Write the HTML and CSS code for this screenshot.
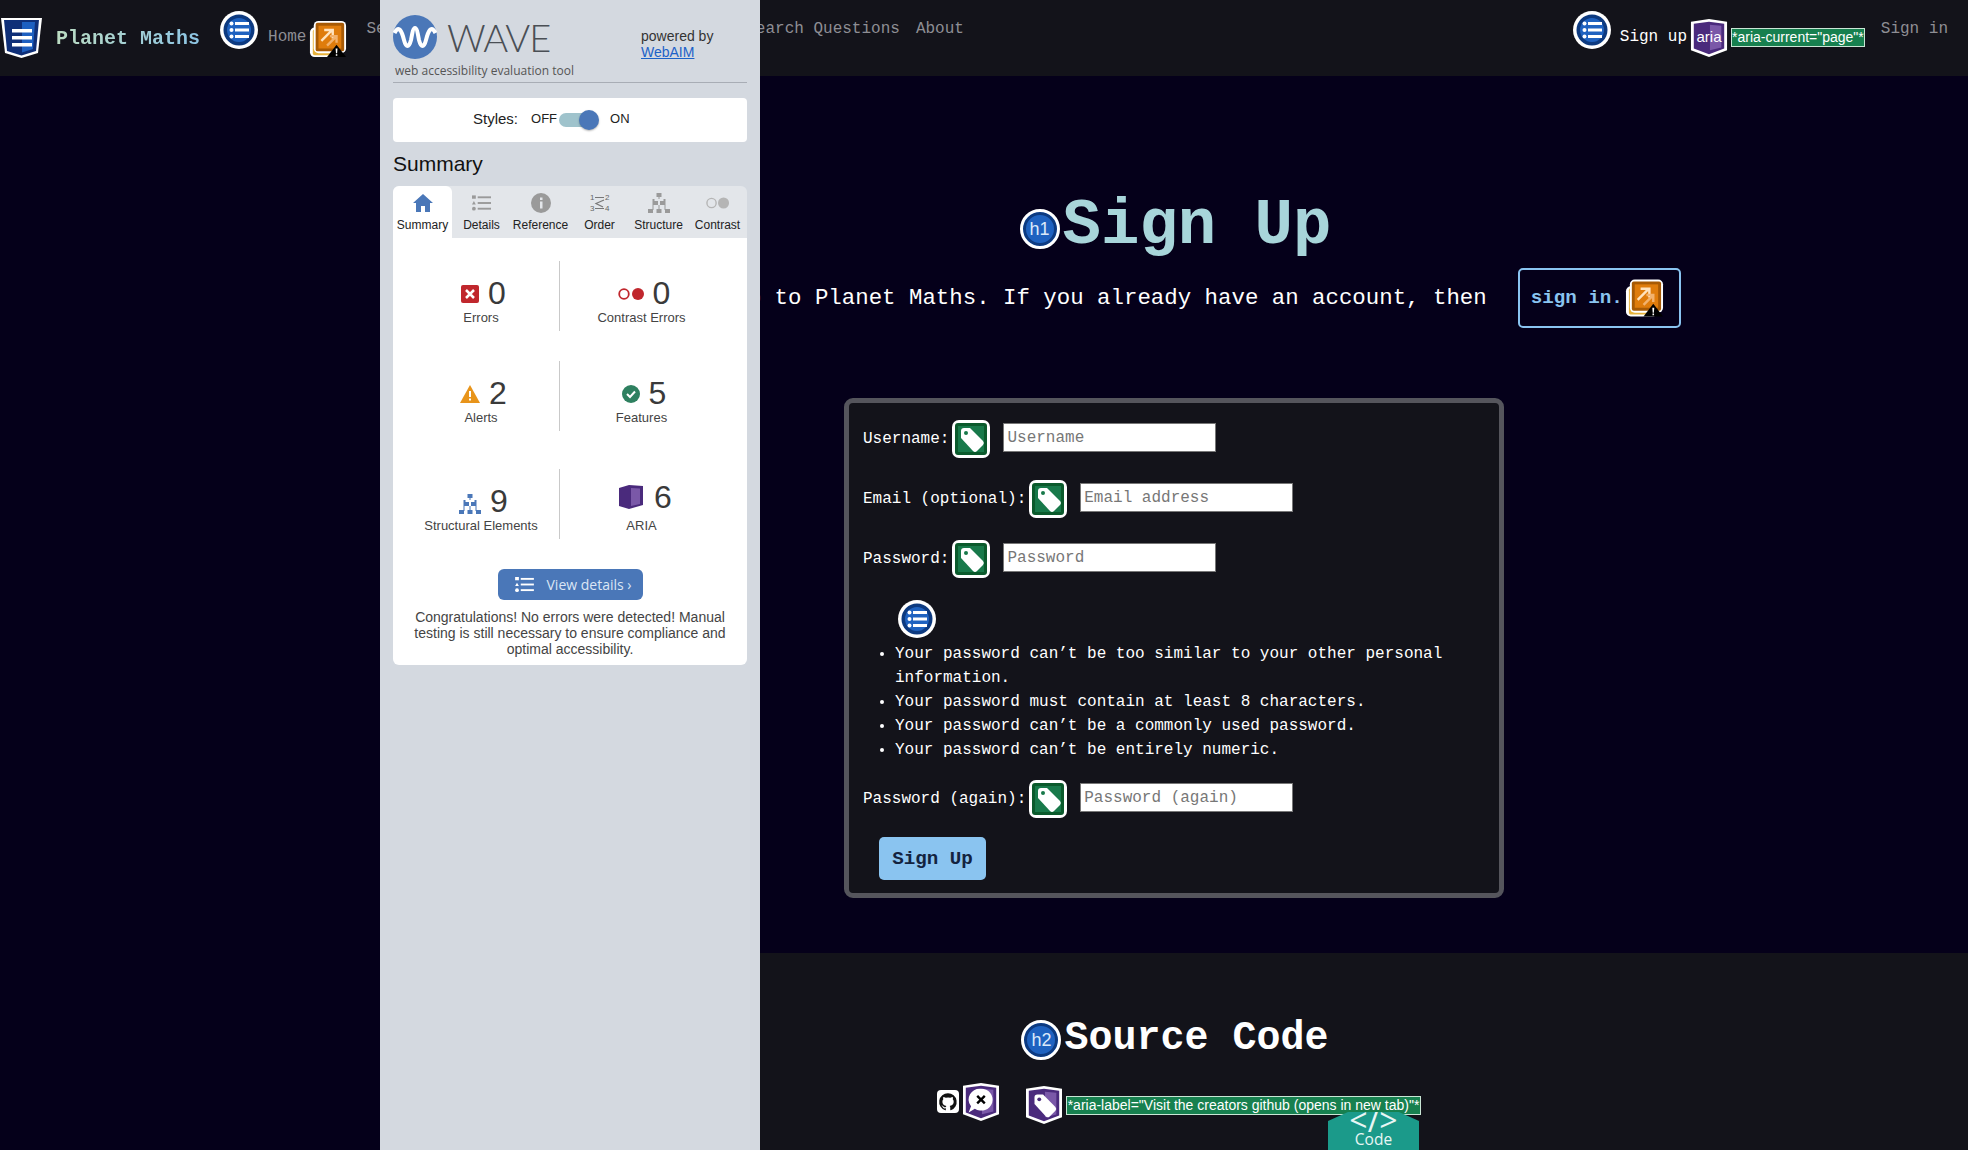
FILE: index.html
```html
<!DOCTYPE html>
<html lang="en">
<head>
    <meta charset="UTF-8">
    <meta name="viewport" content="width=device-width, initial-scale=1.0">
    <title>Sign Up - Planet Maths</title>
    <link rel="stylesheet" href="styles.css">
</head>
<body>
    <svg class="defs" width="0" height="0" aria-hidden="true">
        <symbol id="i-list" viewBox="0 0 38 38">
            <circle cx="19" cy="19" r="19" fill="#fff"/>
            <circle cx="19" cy="19" r="15.5" fill="#0d3a80"/>
            <circle cx="19" cy="19" r="12" fill="#1f62c0"/>
            <g fill="#fff">
                <circle cx="11.5" cy="12.5" r="2"/><circle cx="11.5" cy="19" r="2"/><circle cx="11.5" cy="25.5" r="2"/>
                <rect x="15" y="11" width="14" height="3"/><rect x="15" y="17.500" width="14" height="3"/><rect x="15" y="24" width="14" height="3"/>
            </g>
        </symbol>
        <symbol id="i-link" viewBox="0 0 40 40">
            <rect x="1" y="8" width="33" height="31" rx="5" fill="#fff"/>
            <rect x="4" y="10" width="28" height="27" rx="2" fill="#e8b33c"/>
            <rect x="5" y="1" width="34" height="34" rx="5" fill="#fff"/>
            <rect x="7" y="3" width="30" height="30" rx="2" fill="#a75a05"/>
            <rect x="10" y="6" width="24" height="24" fill="#df7c0c"/>
            <path d="M13 22 L24 11 M16 10.500 H25 V19.500" fill="none" stroke="#ffe3bf" stroke-width="2.500"/>
            <path d="M19 27 L28 18 M22 17 H29 V24" fill="none" stroke="#f2b26e" stroke-width="2.500"/>
            <path d="M29 26 L39 39 H19 Z" fill="#000"/>
            <path d="M28 30 h2 l-.4 5 h-1.200 Z M28.200 36 h1.600 v1.600 h-1.600 Z" fill="#fff"/>
        </symbol>
        <symbol id="i-tag" viewBox="0 0 38 38">
            <rect x="0" y="0" width="38" height="38" rx="7" fill="#fff"/>
            <rect x="3" y="3" width="32" height="32" rx="3" fill="#0b5a2c"/>
            <rect x="6" y="6" width="26" height="26" fill="#18794a"/>
            <path d="M9 11 a3 3 0 0 1 3 -3 h6 l13 13 a3 3 0 0 1 0 4 l-6 6 a3 3 0 0 1 -4 0 l-12 -13 Z" fill="#fff"/>
            <circle cx="14" cy="13" r="2" fill="#18794a"/>
        </symbol>
        <symbol id="i-shield" viewBox="0 0 38 40">
            <path d="M0 3 L19 0 L38 3 V33 L19 40 L0 33 Z" fill="#fff"/>
            <path d="M3 5 L19 3 L35 5 V31 L19 37 L3 31 Z" fill="#4a2a7c"/>
            <path d="M20 6 L32 7 V30 L20 33 Z" fill="#7a58a8"/>
        </symbol>
        <symbol id="i-tree" viewBox="0 0 22 20">
            <g fill="currentColor">
                <rect x="8.500" y="0" width="5" height="4"/><rect x="5" y="8" width="5" height="4"/><rect x="12" y="8" width="5" height="4"/>
                <rect x="0" y="16" width="5" height="4"/><rect x="8.500" y="16" width="5" height="4"/><rect x="17" y="16" width="5" height="4"/>
                <path d="M10.500 4 h1 v2 h6 v10 h1 v1 h-2 v-5 h-1 v-6 h-9 v6 h-1 v5 h-2 v-1 h1 v-10 h6 Z M10.500 12 h1 v4 h-1 Z"/>
            </g>
        </symbol>
        <symbol id="i-details" viewBox="0 0 20 16">
            <g fill="currentColor">
                <rect x="0" y="0" width="4" height="3.500"/><path d="M2 6 L4 9.500 H0 Z"/><circle cx="2" cy="14" r="2"/>
                <rect x="6" y="1" width="14" height="2"/><rect x="6" y="7" width="14" height="2"/><rect x="6" y="13" width="14" height="2"/>
            </g>
        </symbol>
    </svg>

    <nav class="topbar">
        <a class="brand" href="#">
            <svg class="brand-logo" viewBox="0 0 43 42">
                <path d="M1 1 H42 L38 36 L21.500 41 L5 36 Z" fill="#fff"/>
                <path d="M4 3 H39 L36 34 L21.500 38.500 L7 34 Z" fill="#0f2f78"/>
                <path d="M22 5 H35 L33 32 L22 35.500 Z" fill="#1d5fc0"/>
                <rect x="12" y="12" width="20" height="3.500" fill="#fff"/><rect x="12" y="19" width="20" height="3.500" fill="#fff"/><rect x="12" y="26" width="20" height="3.500" fill="#fff"/>
            </svg>
            <span class="brand-name">Planet Maths</span>
        </a>
        <div class="nav-group nav-home">
            <svg class="ico"><use href="#i-list"/></svg>
            <a class="nav-link" href="#">Home</a>
            <svg class="ico ico-link"><use href="#i-link"/></svg>
        </div>
        <a class="nav-link nav-plain nav-search" href="#">Search</a>
        <a class="nav-link nav-plain nav-research" href="#">Research Questions</a>
        <a class="nav-link nav-plain nav-about" href="#">About</a>
        <div class="nav-group nav-signup">
            <svg class="ico"><use href="#i-list"/></svg>
            <a class="nav-link nav-current" href="#">Sign up</a>
            <span class="badge-aria"><svg class="ico"><use href="#i-shield"/></svg><span class="badge-text">aria</span></span>
            <span class="aria-code">*aria-current="page"*</span>
        </div>
        <a class="nav-link nav-plain nav-signin" href="#">Sign in</a>
    </nav>

    <main class="page">
        <section class="signup">
            <h1 class="title">
                <span class="heading-tag tag-h1">h1</span>Sign Up
            </h1>
            <div class="intro">
                <p>Sign up to Planet Maths. If you already have an account, then</p>
                <a class="signin-link" href="#">sign in.<svg class="ico ico-link"><use href="#i-link"/></svg></a>
            </div>
            <form class="signup-form" action="#" method="POST">
                <div class="field">
                    <label for="username">Username:</label>
                    <svg class="ico"><use href="#i-tag"/></svg>
                    <input type="text" id="username" placeholder="Username">
                </div>
                <div class="field">
                    <label for="email">Email (optional):</label>
                    <svg class="ico"><use href="#i-tag"/></svg>
                    <input type="email" id="email" placeholder="Email address">
                </div>
                <div class="field">
                    <label for="password1">Password:</label>
                    <svg class="ico"><use href="#i-tag"/></svg>
                    <input type="password" id="password1" placeholder="Password">
                </div>
                <svg class="ico list-mark"><use href="#i-list"/></svg>
                <ul class="rules">
                    <li>Your password can’t be too similar to your other personal information.</li>
                    <li>Your password must contain at least 8 characters.</li>
                    <li>Your password can’t be a commonly used password.</li>
                    <li>Your password can’t be entirely numeric.</li>
                </ul>
                <div class="field">
                    <label for="password2">Password (again):</label>
                    <svg class="ico"><use href="#i-tag"/></svg>
                    <input type="password" id="password2" placeholder="Password (again)">
                </div>
                <button type="submit">Sign Up</button>
            </form>
        </section>

        <section class="source">
            <h2 class="subtitle"><span class="heading-tag tag-h2">h2</span>Source Code</h2>
            <div class="source-links">
                <a class="github" href="#">
                    <svg viewBox="0 0 24 24"><path fill="#111" d="M12 1.500a10.500 10.500 0 0 0-3.300 20.500c.5.100.7-.2.7-.5v-1.900c-2.900.6-3.500-1.300-3.500-1.300-.5-1.200-1.200-1.500-1.200-1.500-1-.7.100-.7.100-.7 1 .1 1.600 1.100 1.600 1.100.9 1.600 2.500 1.100 3 .9.100-.7.400-1.100.7-1.400-2.300-.3-4.800-1.200-4.800-5.200 0-1.100.4-2.100 1.100-2.800-.1-.3-.5-1.300.1-2.800 0 0 .9-.3 2.900 1.100a10 10 0 0 1 5.300 0c2-1.400 2.900-1.100 2.900-1.100.6 1.500.2 2.500.1 2.800.7.700 1.100 1.700 1.100 2.800 0 4-2.500 4.900-4.800 5.200.4.300.7.900.7 1.900v2.800c0 .3.200.6.700.5A10.500 10.500 0 0 0 12 1.500Z"/></svg>
                </a>
                <svg class="ico ico-chat" viewBox="0 0 38 40">
                    <use href="#i-shield"/>
                    <path d="M19 6 a12 11.500 0 1 1 -6.500 21 L6 31 L8.500 24.500 A12 11.500 0 0 1 19 6 Z" fill="#fff"/>
                    <path d="M15 13.500 L23 21.500 M23 13.500 L15 21.500" stroke="#000" stroke-width="2.500"/>
                </svg>
                <svg class="ico ico-ptag" viewBox="0 0 38 40">
                    <use href="#i-shield"/>
                    <path d="M9 12 a3 3 0 0 1 3 -3 h6 l13 13 a3 3 0 0 1 0 4 l-6 6 a3 3 0 0 1 -4 0 l-12 -13 Z" fill="#fff"/>
                    <circle cx="14" cy="14" r="2" fill="#4a2a7c"/>
                </svg>
                <span class="aria-code aria-long">*aria-label="Visit the creators github (opens in new tab)"*</span>
            </div>
        </section>
    </main>

    <a class="code-tab" href="#">
        <span class="code-mark">&lt;/&gt;</span>
        <span class="code-word">Code</span>
    </a>

    <aside class="wave">
        <div class="wave-head">
            <div class="wave-brand">
                <div class="wave-logo">
                    <svg class="wave-circle" viewBox="0 0 44 44">
                        <circle cx="22" cy="22" r="22" fill="#4a77b8"/>
                        <path d="M1.500 18 C6 9 9 17 11 25 C13 33 16 33 18 25 C19 20 20 13 22 13 C24 13 25 20 26 25 C28 33 31 33 33 25 C35 17 38 9 42.500 18" fill="none" stroke="#fff" stroke-width="4"/>
                    </svg>
                    <span class="wave-name">WAVE</span>
                </div>
                <div class="wave-tagline">web accessibility evaluation tool</div>
            </div>
            <div class="wave-powered">powered by<br><a href="#">WebAIM</a></div>
        </div>

        <div class="styles-bar">
            <span class="styles-label">Styles:</span>
            <span class="styles-state">OFF</span>
            <span class="switch"><span class="switch-knob"></span></span>
            <span class="styles-state">ON</span>
        </div>

        <h2 class="wave-title">Summary</h2>

        <div class="tabs">
            <div class="tab active">
                <svg class="tab-ico" viewBox="0 0 20 20"><path fill="#4a77b8" d="M10 1 L20 10 H17 V19 H12 V13 H8 V19 H3 V10 H0 Z"/></svg>
                <span>Summary</span>
            </div>
            <div class="tab">
                <svg class="tab-ico tab-ico-details"><use href="#i-details"/></svg>
                <span>Details</span>
            </div>
            <div class="tab">
                <svg class="tab-ico" viewBox="0 0 20 20"><circle cx="10" cy="10" r="10" fill="currentColor"/><rect x="9" y="8.500" width="2.500" height="7" fill="#e3e6ea"/><rect x="9" y="4.500" width="2.500" height="2.500" fill="#e3e6ea"/></svg>
                <span>Reference</span>
            </div>
            <div class="tab">
                <svg class="tab-ico" viewBox="0 0 20 20">
                    <text x="0" y="7" class="order-num">1</text><text x="15" y="7" class="order-num">2</text>
                    <text x="0" y="18" class="order-num">3</text><text x="15" y="18" class="order-num">4</text>
                    <path d="M5 4.500 H14 M5 15.500 H14 M14 7 L6 10.500 L13 14" fill="none" stroke="#777" stroke-width="1.200"/>
                </svg>
                <span>Order</span>
            </div>
            <div class="tab">
                <svg class="tab-ico"><use href="#i-tree"/></svg>
                <span>Structure</span>
            </div>
            <div class="tab">
                <svg class="tab-ico" viewBox="0 0 26 14"><circle cx="6" cy="7" r="5" fill="none" stroke="#b5b5b5" stroke-width="1.500"/><circle cx="19" cy="7" r="6" fill="#b5b5b5"/></svg>
                <span>Contrast</span>
            </div>
        </div>

        <div class="summary">
            <div class="stats">
                <div class="stat">
                    <div class="count">
                        <svg class="stat-ico" viewBox="0 0 18 18"><rect width="18" height="18" rx="2" fill="#c0272d"/><path d="M5 5 L13 13 M13 5 L5 13" stroke="#fff" stroke-width="2.500"/></svg>
                        <span class="num">0</span>
                    </div>
                    <div class="stat-label">Errors</div>
                </div>
                <div class="stat">
                    <div class="count">
                        <svg class="stat-ico stat-ico-wide" viewBox="0 0 26 12"><circle cx="6" cy="6" r="4.800" fill="none" stroke="#c0272d" stroke-width="1.800"/><circle cx="20" cy="6" r="6" fill="#c0272d"/></svg>
                        <span class="num">0</span>
                    </div>
                    <div class="stat-label">Contrast Errors</div>
                </div>
                <div class="stat">
                    <div class="count">
                        <svg class="stat-ico stat-ico-alert" viewBox="0 0 20 18"><path d="M10 0 L20 18 H0 Z" fill="#e8941a"/><rect x="9" y="6" width="2" height="6" fill="#fff"/><rect x="9" y="13.500" width="2" height="2" fill="#fff"/></svg>
                        <span class="num">2</span>
                    </div>
                    <div class="stat-label">Alerts</div>
                </div>
                <div class="stat">
                    <div class="count">
                        <svg class="stat-ico" viewBox="0 0 18 18"><circle cx="9" cy="9" r="9" fill="#2e8060"/><path d="M5 9 L8 12 L13 6.500" fill="none" stroke="#fff" stroke-width="2"/></svg>
                        <span class="num">5</span>
                    </div>
                    <div class="stat-label">Features</div>
                </div>
                <div class="stat stat-last">
                    <div class="count">
                        <svg class="stat-ico stat-tree"><use href="#i-tree"/></svg>
                        <span class="num">9</span>
                    </div>
                    <div class="stat-label">Structural Elements</div>
                </div>
                <div class="stat stat-last stat-aria">
                    <div class="count">
                        <svg class="stat-ico stat-cube" viewBox="0 0 24 24"><path d="M0 3 L10 0 L24 1 V20 L10 24 L0 21 Z" fill="#4a2a7c"/><path d="M12 3 L21 3.500 V19 L12 21 Z" fill="#7a58a8"/></svg>
                        <span class="num">6</span>
                    </div>
                    <div class="stat-label">ARIA</div>
                </div>
            </div>
            <a class="details-btn" href="#">
                <svg class="details-ico"><use href="#i-details"/></svg>
                <span>View details ›</span>
            </a>
            <p class="congrats">Congratulations! No errors were detected! Manual testing is still necessary to ensure compliance and optimal accessibility.</p>
        </div>
    </aside>
</body>
</html>
```

FILE: styles.css
```css
* {
    box-sizing: border-box;
    margin: 0;
    padding: 0;
}

html, body {
    height: 100%;
    overflow: hidden;
}

body {
    position: relative;
    background-color: #05001a;
    font-family: "Liberation Mono", monospace;
    font-size: 16px;
    color: #fff;
}

a {
    text-decoration: none;
}

.defs {
    position: absolute;
}

.ico {
    display: block;
    flex: none;
    width: 38px;
    height: 38px;
}

/* top nav */
.topbar {
    display: flex;
    align-items: flex-start;
    height: 76px;
    padding-right: 20px;
    background-color: #13131a;
}

.brand {
    display: flex;
    align-items: center;
    gap: 13px;
    height: 76px;
}

.brand-logo {
    width: 43px;
    height: 42px;
}

.brand-name {
    font-size: 20px;
    font-weight: bold;
    background: linear-gradient(90deg, #bcdcc2, #8cc4e4);
    -webkit-background-clip: text;
    background-clip: text;
    color: transparent;
}

.nav-group {
    display: flex;
    align-items: flex-start;
    margin-top: 11px;
}

.nav-link {
    color: #8e8e94;
    line-height: 20px;
}

.nav-plain {
    margin-top: 19px;
}

.nav-home {
    margin-left: 20px;
}

.nav-home .nav-link {
    margin: 16px 3px 0 10px;
}

.nav-home .ico-link {
    height: 40px;
    margin-top: 8px;
}

.nav-search {
    margin-left: 19px;
}

.nav-research {
    margin-left: 303px;
}

.nav-about {
    margin-left: 16px;
}

.nav-signup {
    margin-left: auto;
}

.nav-current {
    margin: 16px 3px 0 9px;
    color: #fff;
}

.badge-aria {
    position: relative;
    display: block;
    width: 38px;
    height: 38px;
    margin-top: 8px;
}

.badge-text {
    position: absolute;
    top: 9px;
    left: 0;
    width: 38px;
    text-align: center;
    font-family: "Liberation Sans", sans-serif;
    font-size: 15px;
    color: #fff;
}

.aria-code {
    display: block;
    background-color: #17804f;
    border: 1px solid #c9e6d5;
    color: #fff;
    font-family: "Liberation Sans", sans-serif;
    font-size: 14px;
    line-height: 17px;
    white-space: nowrap;
}

.nav-signup .aria-code {
    margin: 17px 16px 0 3px;
}

/* sign up section */
.page {
    margin-left: 380px;
}

.signup {
    padding: 106px 0 55px;
}

.title {
    display: flex;
    justify-content: center;
    align-items: center;
    height: 86px;
    padding: 2px 0 0 3px;
    font-size: 64px;
    line-height: 84px;
    color: #a8d5da;
}

.heading-tag {
    display: flex;
    justify-content: center;
    align-items: center;
    flex: none;
    width: 40px;
    height: 40px;
    border-radius: 50%;
    background-color: #1f62c0;
    border: 3px solid #fff;
    box-shadow: inset 0 0 0 3px #0d3a80;
    font-family: "Liberation Sans", sans-serif;
    font-size: 18px;
    font-weight: normal;
    color: #dce9fa;
}

.tag-h1 {
    margin: 6px 3px 0 0;
}

.intro {
    display: flex;
    justify-content: center;
    align-items: center;
    height: 60px;
    font-size: 22.4px;
}

.signin-link {
    display: flex;
    align-items: center;
    height: 60px;
    margin-left: 31px;
    padding: 0 15px 0 11px;
    border: 2px solid #8ac4f0;
    border-radius: 5px;
    color: #8ac4f0;
    font-size: 19.2px;
    font-weight: bold;
}

.signin-link .ico-link {
    margin-left: 2px;
    width: 39px;
    height: 40px;
}

.signup-form {
    width: 660px;
    margin: 70px auto 0;
    padding: 17px 13px 13px 14px;
    background-color: #13131a;
    border: 5px solid #55555c;
    border-radius: 9px;
}

.field {
    display: flex;
    align-items: center;
    height: 38px;
    margin-bottom: 22px;
}

.field label {
    margin-right: 3px;
    margin-bottom: 1px;
}

.field input {
    width: 213px;
    height: 29px;
    margin-left: 13px;
    margin-bottom: 3px;
    padding: 0 3px;
    border: 1px solid #777;
    background-color: #fff;
    font-family: "Liberation Mono", monospace;
    font-size: 16px;
}

.field input::placeholder {
    color: #777;
}

.list-mark {
    margin-left: 35px;
}

.rules {
    margin: 4px 0 18px;
    padding-left: 32px;
    line-height: 24px;
}

.signup-form button {
    display: block;
    width: 107px;
    height: 43px;
    margin: -3px 0 0 16px;
    background-color: #8ac4f0;
    border: none;
    border-radius: 5px;
    color: #13233f;
    font-family: "Liberation Mono", monospace;
    font-size: 19.2px;
    font-weight: bold;
}

/* source code section */
.source {
    height: 197px;
    padding-top: 60px;
    background-color: #13131a;
}

.subtitle {
    display: flex;
    justify-content: center;
    align-items: center;
    height: 52px;
    padding-left: 2px;
    font-size: 40px;
    line-height: 52px;
}

.tag-h2 {
    margin: 2px 3px 0 0;
}

.source-links {
    display: flex;
    justify-content: center;
    align-items: flex-start;
    margin-top: 18px;
    padding-left: 10px;
}

.github {
    display: flex;
    justify-content: center;
    align-items: center;
    width: 22px;
    height: 23px;
    margin: 7px 3px 0 0;
    background-color: #fff;
    border-radius: 4px;
}

.github svg {
    width: 20px;
    height: 20px;
}

.ico-ptag {
    margin: 3px 3px 0 25px;
}

.aria-long {
    margin-top: 13px;
    padding: 0 1px;
}

.code-tab {
    position: absolute;
    left: 1328px;
    bottom: 0;
    display: flex;
    flex-direction: column;
    align-items: center;
    width: 91px;
    height: 38px;
    background-color: #1b9a8a;
    clip-path: polygon(22% 0, 78% 0, 100% 24%, 100% 100%, 0 100%, 0 24%);
    color: #e8f6f4;
    font-family: "Open Sans", sans-serif;
}

.code-mark {
    margin-top: -2px;
    font-size: 32px;
    line-height: 19px;
}

.code-word {
    margin-top: 2px;
    font-size: 15.5px;
    line-height: 17px;
}

/* wave panel */
.wave {
    position: absolute;
    top: 0;
    left: 380px;
    bottom: 0;
    width: 380px;
    padding: 0 13px;
    background-color: #d4d9e0;
    font-family: "Liberation Sans", sans-serif;
    color: #222;
}

.wave-head {
    display: flex;
    justify-content: space-between;
    height: 83px;
    border-bottom: 1px solid #a8adb5;
}

.wave-logo {
    display: flex;
    align-items: center;
    gap: 10px;
    margin-top: 15px;
}

.wave-circle {
    width: 44px;
    height: 44px;
}

.wave-name {
    font-family: Lato, sans-serif;
    font-size: 38px;
    font-weight: 300;
    letter-spacing: -1px;
    line-height: 44px;
    color: #4a4f55;
}

.wave-tagline {
    margin: 3px 0 0 2px;
    font-family: "Open Sans", sans-serif;
    font-size: 12px;
    color: #555;
}

.wave-powered {
    width: 106px;
    margin-top: 28px;
    font-size: 14px;
    line-height: 16px;
    color: #333;
}

.wave-powered a {
    color: #1c62c8;
    text-decoration: underline;
}

.styles-bar {
    display: flex;
    align-items: center;
    height: 44px;
    margin-top: 15px;
    padding-left: 80px;
    background-color: #fff;
    border-radius: 4px;
}

.styles-label {
    margin-right: 13px;
    margin-top: -3px;
    font-size: 15px;
}

.styles-state {
    font-size: 13px;
    margin-top: -3px;
}

.switch {
    position: relative;
    display: block;
    width: 32px;
    height: 14px;
    margin: 0 19px 0 2px;
    background-color: #9fc3cc;
    border-radius: 7px;
}

.switch-knob {
    position: absolute;
    top: -3px;
    left: 20px;
    width: 20px;
    height: 20px;
    background-color: #4a77b8;
    border-radius: 50%;
    box-shadow: 0 1px 2px rgba(0, 0, 0, 0.3);
}

.wave-title {
    margin-top: 10px;
    font-size: 21px;
    font-weight: normal;
    line-height: 24px;
    color: #111;
}

.tabs {
    display: flex;
    height: 52px;
    margin-top: 10px;
    background-color: #e3e6ea;
    border-radius: 6px 6px 0 0;
}

.tab {
    display: flex;
    flex: 1;
    flex-direction: column;
    align-items: center;
    padding-top: 7px;
    font-size: 12px;
    color: #9a9a9a;
    border-radius: 6px 6px 0 0;
}

.tab span {
    margin-top: 5px;
    color: #222;
    white-space: nowrap;
}

.tab.active {
    background-color: #fff;
}

.tab-ico {
    display: block;
    width: 24px;
    height: 20px;
}

.tab-ico-details {
    width: 19px;
}

.order-num {
    font-size: 8px;
    fill: #666;
}

.summary {
    padding: 23px 0 8px;
    background-color: #fff;
    border-radius: 0 0 6px 6px;
}

.stats {
    display: grid;
    grid-template-columns: 166px 164px;
    row-gap: 30px;
}

.stat {
    height: 70px;
    padding-top: 14px;
    text-align: center;
}

.stat:nth-child(odd) {
    padding-left: 10px;
}

.stat:nth-child(even) {
    border-left: 1px solid #c9c9c9;
}

.stat-last {
    margin-top: 8px;
}

.count {
    display: flex;
    justify-content: center;
    align-items: center;
    gap: 9px;
    height: 36px;
    padding-left: 5px;
}

.stat-aria .count {
    gap: 11px;
    padding-left: 8px;
}

.num {
    font-size: 32px;
    line-height: 36px;
    color: #3a3a3a;
}

.stat-ico {
    display: block;
    width: 18px;
    height: 18px;
    margin-top: 2px;
}

.stat-ico-wide {
    width: 26px;
    height: 12px;
}

.stat-ico-alert {
    width: 20px;
}

.stat-tree {
    width: 22px;
    height: 20px;
    margin-top: 6px;
    color: #4a77b8;
}

.stat-cube {
    width: 24px;
    height: 24px;
    margin-top: -8px;
}

.stat-aria .num {
    margin-top: -8px;
}

.stat-label {
    margin-top: -1px;
    font-size: 13px;
    line-height: 16px;
    color: #444;
}

.details-btn {
    display: flex;
    align-items: center;
    width: 145px;
    height: 31px;
    margin: 30px auto 0;
    padding-left: 17px;
    background-color: #4a77b8;
    border-radius: 6px;
    font-family: "Open Sans", sans-serif;
    font-size: 14px;
    color: #dbe6f5;
}

.details-ico {
    width: 19px;
    height: 15px;
    margin-right: 13px;
    color: #fff;
}

.congrats {
    margin-top: 9px;
    padding: 0 18px;
    font-size: 14px;
    line-height: 16px;
    text-align: center;
    color: #444;
}
```
